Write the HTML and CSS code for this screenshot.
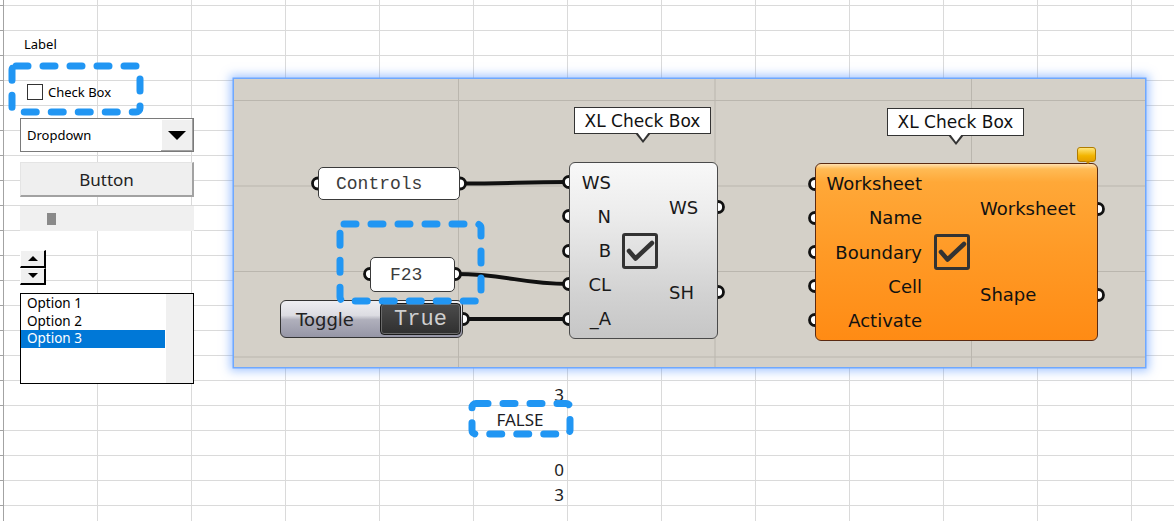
FILE: index.html
```html
<!DOCTYPE html>
<html>
<head>
<meta charset="utf-8">
<link rel="stylesheet" href="styles.css">
</head>
<body>
<div class="sheet">
  <div class="cell r16">3</div>
  <div class="cell bool r17">FALSE</div>
  <div class="cell r19">0</div>
  <div class="cell r20">3</div>
</div>

<div class="controls">
  <div class="lbl">Label</div>
  <div class="chk"><span class="box"></span><span>Check Box</span></div>
  <div class="dd"><span class="dd-text">Dropdown</span><span class="dd-btn"><span class="tri-down"></span></span></div>
  <div class="btn">Button</div>
  <div class="scroll"><span class="thumb"></span></div>
  <div class="spin"><span class="sp"><i class="tri-up-s"></i></span><span class="sp"><i class="tri-down-s"></i></span></div>
  <div class="list">
    <div class="items">
      <div class="opt">Option 1</div>
      <div class="opt">Option 2</div>
      <div class="opt sel">Option 3</div>
    </div>
    <div class="lscroll"></div>
  </div>
</div>

<div class="gh">
  <div class="panel p-controls">Controls</div>
  <div class="panel p-f23">F23</div>
  <div class="toggle"><span class="tname">Toggle</span><span class="tval">True</span></div>

  <div class="tip tip1">XL Check Box</div>
  <div class="tip tip2">XL Check Box</div>

  <div class="comp c-grey">
    <div class="ins ins-grey">
      <span>WS</span><span>N</span><span>B</span><span>CL</span><span>_A</span>
    </div>
    <svg class="icon" viewBox="0 0 36 36" width="36" height="36">
      <rect x="1.5" y="1.5" width="33" height="33" rx="1.5" fill="none" stroke="#333" stroke-width="3"/>
      <path d="M7 18 L13.5 25.5 L30 10" fill="none" stroke="#333" stroke-width="4.5" stroke-linecap="round" stroke-linejoin="round"/>
    </svg>
    <div class="outs">
      <span>WS</span><span>SH</span>
    </div>
  </div>

  <div class="comp c-orange">
    <div class="ins ins-orange">
      <span>Worksheet</span><span>Name</span><span>Boundary</span><span>Cell</span><span>Activate</span>
    </div>
    <svg class="icon" viewBox="0 0 36 36" width="36" height="36">
      <rect x="1.5" y="1.5" width="33" height="33" rx="1.5" fill="none" stroke="#333" stroke-width="3"/>
      <path d="M7 18 L13.5 25.5 L30 10" fill="none" stroke="#333" stroke-width="4.5" stroke-linecap="round" stroke-linejoin="round"/>
    </svg>
    <div class="outs">
      <span>Worksheet</span><span>Shape</span>
    </div>
  </div>
  <div class="tag"></div>

  <svg class="wires" width="911" height="288" viewBox="0 0 911 288">
    <g fill="none" stroke="#111" stroke-width="4">
      <path d="M226 104.5 C 280 104.5, 285 103, 335 103"/>
      <path d="M221 195 C 275 195, 285 205, 335 205"/>
      <path d="M229 240 L 335 240"/>
    </g>
    <g fill="#fff" stroke="#111" stroke-width="2.8">
      <path d="M84 99 A5.5 5.5 0 0 0 84 110"/>
      <path d="M226 99 A5.5 5.5 0 0 1 226 110"/>
      <path d="M136 189.5 A5.5 5.5 0 0 0 136 200.5"/>
      <path d="M221 189.5 A5.5 5.5 0 0 1 221 200.5"/>
      <path d="M229 234.5 A5.5 5.5 0 0 1 229 245.5"/>

      <path d="M335 97.5 A5.5 5.5 0 0 0 335 108.5"/>
      <path d="M335 131.5 A5.5 5.5 0 0 0 335 142.5"/>
      <path d="M335 166.5 A5.5 5.5 0 0 0 335 177.5"/>
      <path d="M335 199.5 A5.5 5.5 0 0 0 335 210.5"/>
      <path d="M335 234.5 A5.5 5.5 0 0 0 335 245.5"/>
      <path d="M484 122.5 A5.5 5.5 0 0 1 484 133.5"/>
      <path d="M484 207.5 A5.5 5.5 0 0 1 484 218.5"/>

      <path d="M581 99.5 A5.5 5.5 0 0 0 581 110.5"/>
      <path d="M581 133.5 A5.5 5.5 0 0 0 581 144.5"/>
      <path d="M581 167.5 A5.5 5.5 0 0 0 581 178.5"/>
      <path d="M581 201.5 A5.5 5.5 0 0 0 581 212.5"/>
      <path d="M581 235.5 A5.5 5.5 0 0 0 581 246.5"/>
      <path d="M864 124.5 A5.5 5.5 0 0 1 864 135.5"/>
      <path d="M864 210.5 A5.5 5.5 0 0 1 864 221.5"/>
    </g>
  </svg>
</div>

<svg class="marks" width="1174" height="521" viewBox="0 0 1174 521">
  <g fill="none" stroke="#2196f3" stroke-width="7" stroke-linecap="round" stroke-dasharray="12 15">
    <rect x="12" y="66" width="128" height="46" rx="4"/>
    <rect x="340" y="224" width="141" height="77" rx="4"/>
    <rect x="472" y="403.5" width="98" height="30.5" rx="4"/>
  </g>
</svg>
</body>
</html>
```

FILE: styles.css
```css
* { box-sizing: border-box; }
html, body { margin: 0; padding: 0; }
body {
  width: 1174px;
  height: 521px;
  overflow: hidden;
  position: relative;
  background: #fff;
  font-family: "Noto Sans", sans-serif;
  color: #111;
}

/* ---------- spreadsheet ---------- */
.sheet {
  width: 1174px;
  height: 521px;
  padding: 5px 0 0 3px;
  display: grid;
  grid-template-columns: repeat(12, 94px);
  grid-template-rows: repeat(21, 25px);
  background-image:
    linear-gradient(to right, transparent 3px, #a3a3a3 3px, #a3a3a3 4px, transparent 4px),
    linear-gradient(to bottom, #a3a3a3 1px, transparent 1px),
    linear-gradient(to right, #dadada 1px, transparent 1px),
    linear-gradient(to bottom, #dadada 1px, transparent 1px);
  background-size: 100% 100%, 3px 25px, 94px 100%, 100% 25px;
  background-position: 0 0, 0 5px, 3px 0, 0 5px;
  background-repeat: no-repeat, repeat-y, repeat-x, repeat-y;
}
.cell {
  grid-column: 6;
  display: flex;
  align-items: flex-end;
  justify-content: flex-end;
  padding-right: 3px;
  font-family: "Noto Sans", sans-serif;
  font-size: 17px;
  line-height: 20px;
  color: #1c1c24;
}
.bool { justify-content: center; padding-right: 0; }
.r16 { grid-row: 16; }
.r17 { grid-row: 17; }
.r19 { grid-row: 19; }
.r20 { grid-row: 20; }

/* ---------- form controls ---------- */
.controls {
  position: absolute;
  left: 20px;
  top: 36px;
  width: 174px;
  display: flex;
  flex-direction: column;
  font-family: "Noto Sans", sans-serif;
  font-size: 13px;
  color: #000;
}
.lbl { height: 17px; line-height: 17px; padding-left: 4px; }
.chk {
  margin-top: 28px;
  height: 22px;
  display: flex;
  align-items: center;
  gap: 5px;
  padding-left: 7px;
}
.chk .box {
  width: 16px;
  height: 16px;
  border: 1px solid #333;
  background: #fff;
}
.dd {
  margin-top: 15px;
  height: 34px;
  border: 1px solid #7a7a7a;
  background: #fff;
  display: flex;
  align-items: stretch;
}
.dd-text {
  flex: 1;
  display: flex;
  align-items: center;
  padding-left: 6px;
  font-size: 13px;
}
.dd-btn {
  width: 32px;
  background: #f0f0f0;
  box-shadow: inset -1px -1px 0 #a0a0a0, inset 1px 1px 0 #fff;
  display: flex;
  align-items: center;
  justify-content: center;
}
.tri-down {
  width: 0;
  height: 0;
  border-left: 9.5px solid transparent;
  border-right: 9.5px solid transparent;
  border-top: 9px solid #000;
}
.btn {
  margin-top: 10px;
  height: 35px;
  background: #efefef;
  border-top: 1px solid #e4e4e4;
  border-left: 1px solid #e4e4e4;
  border-right: 2px solid #a2a2a2;
  border-bottom: 2px solid #a2a2a2;
  display: flex;
  align-items: center;
  justify-content: center;
  font-size: 17px;
  color: #222;
}
.scroll {
  margin-top: 9px;
  height: 25px;
  background: #f0f0f0;
  padding: 7px 0 0 27px;
}
.thumb { display: block; width: 9px; height: 12px; background: #8a8a8a; }
.spin {
  margin-top: 19px;
  width: 26px;
  height: 35px;
  display: flex;
  flex-direction: column;
}
.sp {
  height: 17.5px;
  background: #f0f0f0;
  border-left: 1px solid #fff;
  border-top: 1px solid #fff;
  border-right: 2px solid #000;
  border-bottom: 2px solid #000;
  display: flex;
  align-items: center;
  justify-content: center;
}
.tri-up-s {
  width: 0; height: 0;
  border-left: 5px solid transparent;
  border-right: 5px solid transparent;
  border-bottom: 5px solid #000;
}
.tri-down-s {
  width: 0; height: 0;
  border-left: 5px solid transparent;
  border-right: 5px solid transparent;
  border-top: 5px solid #000;
}
.list {
  margin-top: 8px;
  height: 91px;
  border: 1.5px solid #000;
  background: #fff;
  display: flex;
}
.items { flex: 1; padding-top: 1px; }
.opt {
  height: 17.5px;
  line-height: 17.5px;
  padding-left: 6px;
  font-size: 13.5px;
  color: #000;
}
.opt.sel { background: #0078d7; color: #fff; }
.lscroll { width: 27px; margin-left: 1px; background: #f0f0f0; }

/* ---------- grasshopper canvas ---------- */
.gh {
  position: absolute;
  left: 234px;
  top: 79px;
  width: 911px;
  height: 288px;
  background-color: #d4d0c8;
  background-image:
    linear-gradient(to right, #bab6ae 1px, transparent 1px),
    linear-gradient(to bottom, #bab6ae 1px, transparent 1px);
  background-size: 256.5px 100%, 100% 85.5px;
  background-position: 224px 0, 0 21px;
  box-shadow: 0 0 0 1.5px #6fa8ff, 0 0 9px 4px rgba(80, 145, 255, 0.5);
}
.panel {
  position: absolute;
  background: #fff;
  border: 1.5px solid #3a3a3a;
  border-radius: 5px;
  font-family: "Liberation Mono", monospace;
  font-size: 18px;
  color: #3c3c3c;
  display: flex;
  align-items: center;
}
.p-controls { left: 84px; top: 88px; width: 142px; height: 33px; padding-left: 17px; }
.p-f23 { left: 136px; top: 178px; width: 85px; height: 35px; padding-left: 19px; }

.toggle {
  position: absolute;
  left: 46px;
  top: 221px;
  width: 183px;
  height: 38px;
  border: 1.5px solid #333;
  border-radius: 6px;
  background: linear-gradient(#eeeef2 0%, #dcdce2 40%, #b0b0bc 52%, #9696a6 100%);
  display: flex;
  align-items: center;
  padding-right: 1px;
}
.tname {
  flex: 1;
  padding-left: 15px;
  font-family: "DejaVu Sans", sans-serif;
  font-size: 18px;
  color: #222;
}
.tval {
  width: 81px;
  height: 32px;
  border: 1.5px solid #1a1a1a;
  border-radius: 4px;
  background: linear-gradient(#4c4c4c, #2f2f2f);
  box-shadow: inset 0 0 0 1px #6a6a6a;
  font-family: "Liberation Mono", monospace;
  font-size: 22px;
  color: #cfcfcf;
  display: flex;
  align-items: center;
  justify-content: center;
}

.tip {
  position: absolute;
  width: 137px;
  background: #fff;
  border: 1.5px solid #333;
  font-family: "DejaVu Sans", sans-serif;
  font-size: 17px;
  color: #111;
  display: flex;
  align-items: center;
  justify-content: center;
}
.tip::before, .tip::after {
  content: "";
  position: absolute;
  left: 50%;
  width: 0;
  height: 0;
}
.tip::before {
  top: 100%;
  margin-left: -8px;
  border-left: 8px solid transparent;
  border-right: 8px solid transparent;
  border-top: 10px solid #333;
}
.tip::after {
  top: 100%;
  margin-left: -6px;
  margin-top: -1px;
  border-left: 6px solid transparent;
  border-right: 6px solid transparent;
  border-top: 8px solid #fff;
}
.tip1 { left: 340px; top: 28px; height: 27px; }
.tip2 { left: 653px; top: 29px; height: 28px; }

.comp {
  position: absolute;
  border: 1.5px solid #4a4a4a;
  border-radius: 6px;
  display: flex;
  align-items: stretch;
  font-family: "DejaVu Sans", sans-serif;
  font-size: 18px;
  color: #1a1a1a;
}
.c-grey {
  left: 335px;
  top: 83px;
  width: 149px;
  height: 177px;
  background: linear-gradient(#f8f8f8 0%, #ececec 30%, #d2d2d2 75%, #c6c6c6 100%);
}
.c-orange {
  left: 581px;
  top: 84px;
  width: 283px;
  height: 178px;
  border-color: #5a2a12;
  background: linear-gradient(#ffe0b0 0px, #ffbb55 5px, #ffa838 18px, #ff9a26 50%, #ff8b14 100%);
  color: #111;
}
.ins {
  display: flex;
  flex-direction: column;
  align-items: flex-end;
  padding: 2px 0;
}
.ins span, .outs span {
  flex: 1;
  display: flex;
  align-items: center;
}
.ins-grey { width: 41px; }
.ins-orange { width: 106px; }
.icon { align-self: center; flex: none; }
.c-grey .icon { margin-left: 11px; }
.c-orange .icon { margin-left: 12px; }
.outs {
  display: flex;
  flex-direction: column;
  padding: 2px 0 3px;
  margin-left: 11px;
}
.c-orange .outs { margin-left: 10px; }

.tag {
  position: absolute;
  left: 843px;
  top: 68px;
  width: 19px;
  height: 15px;
  border: 1px solid #b07c00;
  border-radius: 3px;
  background: linear-gradient(#ffe57a, #f2b400 60%, #e6a000);
}
.tag::after {
  content: "";
  position: absolute;
  left: 7px;
  top: 100%;
  border-left: 3px solid transparent;
  border-right: 3px solid transparent;
  border-top: 3px solid #c88c00;
}

.wires {
  position: absolute;
  left: 0;
  top: 0;
  pointer-events: none;
}

/* ---------- annotation marks ---------- */
.marks {
  position: absolute;
  left: 0;
  top: 0;
  pointer-events: none;
}
```
